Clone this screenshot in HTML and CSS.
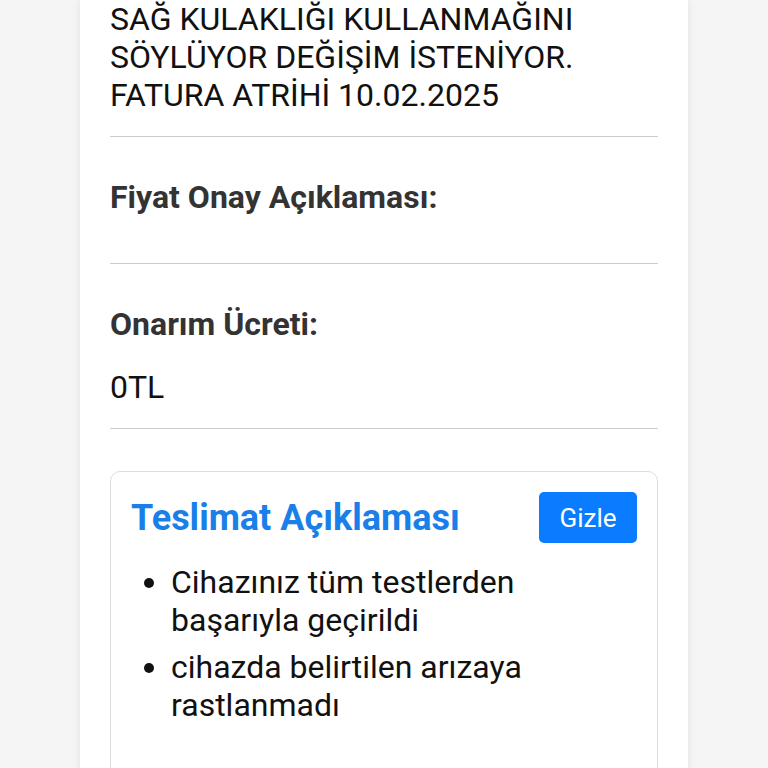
FILE: index.html
```html
<!DOCTYPE html>
<html lang="tr">
<head>
  <meta charset="UTF-8">
  <meta name="viewport" content="width=device-width, initial-scale=1.0">
  <title>Servis Detayı</title>
  <link rel="stylesheet" href="styles.css">
</head>
<body>
  <div class="card">
    <div class="field field-first">
      <p class="field-value">SAĞ KULAKLIĞI KULLANMAĞINI SÖYLÜYOR DEĞİŞİM İSTENİYOR. FATURA ATRİHİ 10.02.2025</p>
    </div>

    <div class="field">
      <p class="field-label">Fiyat Onay Açıklaması:</p>
      <p class="field-value"></p>
    </div>

    <div class="field">
      <p class="field-label">Onarım Ücreti:</p>
      <p class="field-value">0TL</p>
    </div>

    <div class="teslimat" id="teslimat">
      <div class="teslimat-head">
        <h3>Teslimat Açıklaması</h3>
        <button class="btn-toggle" onclick="toggleTeslimat(this)">Gizle</button>
      </div>
      <ul class="teslimat-list" id="teslimatList">
        <li>Cihazınız tüm testlerden başarıyla geçirildi</li>
        <li>cihazda belirtilen arızaya rastlanmadı</li>
      </ul>
    </div>
  </div>

  <script>
    function toggleTeslimat(btn) {
      const list = document.getElementById("teslimatList");
      const hidden = list.style.display === "none";
      list.style.display = hidden ? "" : "none";
      btn.textContent = hidden ? "Gizle" : "Göster";
    }
  </script>
</body>
</html>
```

FILE: styles.css
```css
body {
  margin: 0;
  background: #f5f5f5;
  font-family: Roboto, "Noto Sans", sans-serif;
  color: #111;
}
.card {
  max-width: 548px;
  min-height: 100vh;
  margin: 0 auto;
  padding: 0 30px 60px;
  background: white;
  box-shadow: 0 0 8px rgba(0,0,0,0.08);
}
.field {
  padding: 41px 0 22px;
  border-bottom: 1px solid #ccc;
}
.field-first {
  padding-top: 0;
}
.field-label {
  margin: 0 0 25px;
  font-size: 32px;
  line-height: 38px;
  font-weight: 700;
  color: #333;
}
.field-value {
  margin: 0;
  font-size: 32px;
  line-height: 38px;
}
.teslimat {
  margin-top: 42px;
  border: 1px solid #ddd;
  border-radius: 10px;
  padding: 20px;
  min-height: 400px;
}
.teslimat-head {
  display: flex;
  justify-content: space-between;
  align-items: center;
}
.teslimat-head h3 {
  margin: 0;
  font-size: 36px;
  font-weight: 700;
  color: #1a7fe8;
}
.btn-toggle {
  width: 98px;
  height: 51px;
  border: none;
  border-radius: 5px;
  background: #0a7cff;
  color: white;
  font-family: Roboto, "Noto Sans", sans-serif;
  font-size: 26px;
  cursor: pointer;
}
.teslimat-list {
  margin: 20px 0 0;
  padding-left: 40px;
  font-size: 32px;
  line-height: 38px;
}
.teslimat-list li {
  margin-bottom: 9px;
}
```
